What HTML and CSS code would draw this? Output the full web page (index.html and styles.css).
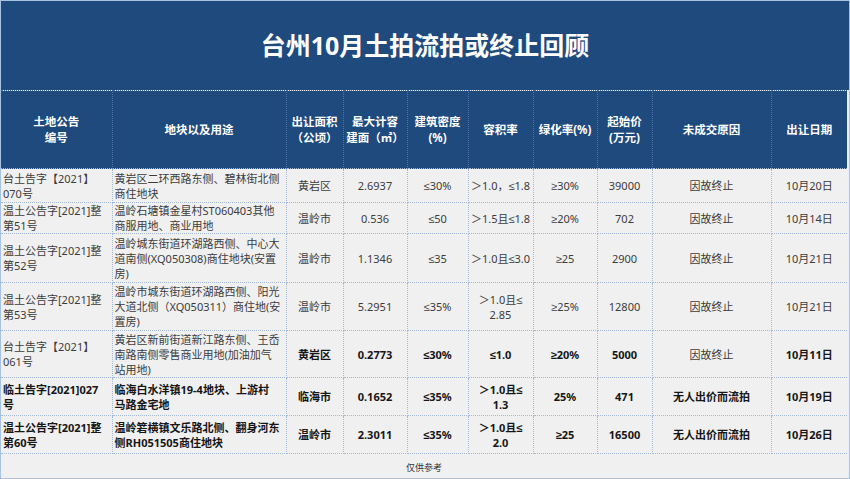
FILE: index.html
```html
<!DOCTYPE html>
<html lang="zh-CN">
<head>
<meta charset="utf-8">
<title>台州10月土拍流拍或终止回顾</title>
<link rel="stylesheet" href="styles.css">
</head>
<body>
<div class="frame">
  <div class="banner"><h1 class="title">台州10月土拍流拍或终止回顾</h1></div>
  <table class="land">
    <colgroup>
      <col class="c1"><col class="c2"><col class="c3"><col class="c4"><col class="c5">
      <col class="c6"><col class="c7"><col class="c8"><col class="c9"><col class="c10">
    </colgroup>
    <thead>
      <tr class="head">
        <th>土地公告<br>编号</th>
        <th>地块以及用途</th>
        <th>出让面积<br>（公顷）</th>
        <th>最大计容<br>建面（㎡）</th>
        <th>建筑密度<br>(%)</th>
        <th>容积率</th>
        <th>绿化率(%)</th>
        <th>起始价<br>(万元)</th>
        <th>未成交原因</th>
        <th>出让日期</th>
      </tr>
    </thead>
    <tbody>
      <tr class="r1">
        <td class="l">台土告字【2021】<br>070号</td>
        <td class="l">黄岩区二环西路东侧、碧林街北侧<br>商住地块</td>
        <td>黄岩区</td><td>2.6937</td><td>≤30%</td><td>＞1.0，≤1.8</td><td>≥30%</td><td>39000</td><td>因故终止</td><td>10月20日</td>
      </tr>
      <tr class="r2">
        <td class="l">温土公告字[2021]整<br>第51号</td>
        <td class="l">温岭石塘镇金星村ST060403其他<br>商服用地、商业用地</td>
        <td>温岭市</td><td>0.536</td><td>≤50</td><td>＞1.5且≤1.8</td><td>≥20%</td><td>702</td><td>因故终止</td><td>10月14日</td>
      </tr>
      <tr class="r3">
        <td class="l">温土公告字[2021]整<br>第52号</td>
        <td class="l">温岭城东街道环湖路西侧、中心大<br>道南侧(XQ050308)商住地块(安置<br>房)</td>
        <td>温岭市</td><td>1.1346</td><td>≤35</td><td>＞1.0且≤3.0</td><td>≥25</td><td>2900</td><td>因故终止</td><td>10月21日</td>
      </tr>
      <tr class="r4">
        <td class="l">温土公告字[2021]整<br>第53号</td>
        <td class="l">温岭市城东街道环湖路西侧、阳光<br>大道北侧（XQ050311）商住地(安<br>置房)</td>
        <td>温岭市</td><td>5.2951</td><td>≤35%</td><td>＞1.0且≤<br>2.85</td><td>≥25%</td><td>12800</td><td>因故终止</td><td>10月21日</td>
      </tr>
      <tr class="r5">
        <td class="l">台土告字【2021】<br>061号</td>
        <td class="l">黄岩区新前街道新江路东侧、王岙<br>南路南侧零售商业用地(加油加气<br>站用地)</td>
        <td class="b">黄岩区</td><td class="b">0.2773</td><td class="b">≤30%</td><td class="b">≤1.0</td><td class="b">≥20%</td><td class="b">5000</td><td>因故终止</td><td class="b">10月11日</td>
      </tr>
      <tr class="r6 bold">
        <td class="l">临土告字[2021]027<br>号</td>
        <td class="l">临海白水洋镇19-4地块、上游村<br>马路金宅地</td>
        <td>临海市</td><td>0.1652</td><td>≤35%</td><td>＞1.0且≤<br>1.3</td><td>25%</td><td>471</td><td>无人出价而流拍</td><td>10月19日</td>
      </tr>
      <tr class="r7 bold">
        <td class="l">温土公告字[2021]整<br>第60号</td>
        <td class="l">温岭箬横镇文乐路北侧、翻身河东<br>侧RH051505商住地块</td>
        <td>温岭市</td><td>2.3011</td><td>≤35%</td><td>＞1.0且≤<br>2.0</td><td>≥25</td><td>16500</td><td>无人出价而流拍</td><td>10月26日</td>
      </tr>
    </tbody>
    <tfoot>
      <tr class="foot"><td colspan="10">仅供参考</td></tr>
    </tfoot>
  </table>
</div>
</body>
</html>
```
FILE: styles.css
```css
html, body {
  margin: 0;
  padding: 0;
  background: #ffffff;
}
body {
  font-family: "Noto Sans", "Liberation Sans", "Noto Sans CJK SC", sans-serif;
}
.frame {
  width: 848px;
  height: 477px;
  border: 1px solid #a8c2e2;
  background: #f0f0f1;
  overflow: hidden;
}
.banner {
  height: 89px;
  background: #1f4a7e;
  display: flex;
  align-items: center;
  justify-content: center;
}
.title {
  margin: 0;
  padding-bottom: 2px;
  color: #ffffff;
  font-size: 25px;
  font-weight: 700;
  line-height: 30px;
  letter-spacing: 0;
}
.land {
  width: 846px;
  table-layout: fixed;
  border-collapse: collapse;
  font-size: 11px;
  line-height: 15px;
  color: #3c3c3c;
}
.c1 { width: 111px; }
.c2 { width: 174px; }
.c3 { width: 57px; }
.c4 { width: 64px; }
.c5 { width: 61px; }
.c6 { width: 65px; }
.c7 { width: 64px; }
.c8 { width: 55px; }
.c9 { width: 119px; }
.c10 { width: 76px; }
.land th {
  background: #1f4a7e;
  color: #ffffff;
  font-weight: 700;
  font-size: 11.5px;
  line-height: 16px;
  text-align: center;
  vertical-align: middle;
  padding: 0;
  border: 1px dotted #4f74a3;
  border-bottom: none;
}
.land th:first-child { border-left: none; }
.land th:last-child { border-right: none; }
.land td {
  padding: 0 1px;
  text-align: center;
  vertical-align: middle;
  white-space: nowrap;
  overflow: hidden;
  border: 1px dotted #a3b9d6;
}
.land td:first-child { border-left: none; }
.land td:last-child { border-right: none; }
.land td.l {
  text-align: left;
  padding-left: 2px;
}
.land td.b,
.land tr.bold td {
  font-weight: 700;
  color: #161616;
}
.head { height: 78px; }
.r1 { height: 34px; }
.r2 { height: 31px; }
.r3 { height: 49px; }
.r4 { height: 48px; }
.r5 { height: 47px; }
.r6 { height: 38px; }
.r7 { height: 38px; }
.foot { height: 24px; }
.foot td {
  font-size: 9px;
  color: #333333;
  border-bottom: none;
  padding-top: 3px;
}
```
